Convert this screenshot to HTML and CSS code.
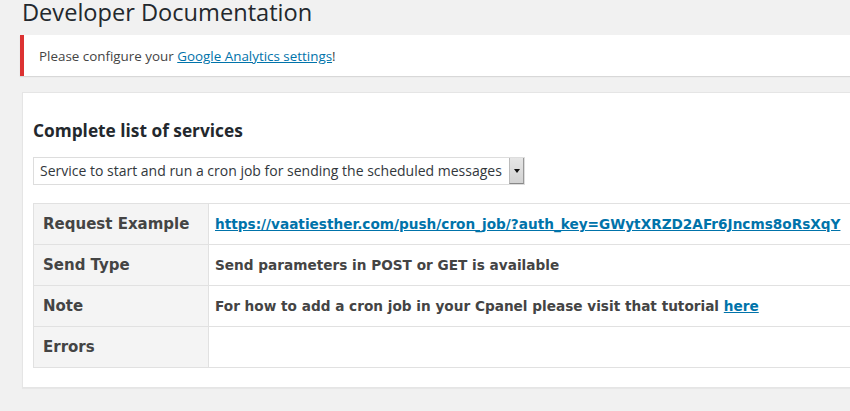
FILE: index.html
```html
<!DOCTYPE html>
<html>
<head>
<meta charset="utf-8">
<link rel="stylesheet" href="styles.css">
</head>
<body>
<div class="wrap">
  <h1 class="title">Developer Documentation</h1>
  <div class="notice">
    <p>Please configure your <a href="#">Google Analytics settings</a>!</p>
  </div>
  <div class="panel">
    <h2 class="panel-title">Complete list of services</h2>
    <div class="select">
      <span class="select-text">Service to start and run a cron job for sending the scheduled messages</span>
      <span class="select-btn"><span class="tri"></span></span>
    </div>
    <table class="doc">
      <tr><th>Request Example</th><td><a href="#">https://vaatiesther.com/push/cron_job/?auth_key=GWytXRZD2AFr6Jncms8oRsXqY</a></td></tr>
      <tr><th>Send Type</th><td>Send parameters in POST or GET is available</td></tr>
      <tr><th>Note</th><td>For how to add a cron job in your Cpanel please visit that tutorial <a href="#">here</a></td></tr>
      <tr><th>Errors</th><td></td></tr>
    </table>
  </div>
</div>
</body>
</html>
```
FILE: styles.css
```css
html, body {
  margin: 0;
  padding: 0;
  background: #f1f1f1;
  overflow: hidden;
}
body {
  font-family: "Open Sans", "Noto Sans", sans-serif;
  color: #444;
  width: 850px;
  height: 411px;
}
.wrap {
  padding-left: 20px;
  width: 900px;
}
.title {
  margin: 0;
  padding: 0 0 0 2px;
  width: max-content;
  font-size: 23.6px;
  font-weight: 400;
  line-height: 25px;
  color: #23282d;
  height: 35px;
}
.notice {
  background: #fff;
  border-left: 4px solid #dc3232;
  box-shadow: 0 1px 1px rgba(0,0,0,0.1);
  height: 41px;
  display: flex;
  align-items: center;
  padding-left: 15px;
}
.notice p {
  margin: 0;
  font-size: 13.4px;
  color: #444;
}
.notice a {
  color: #0073aa;
}
.panel {
  margin-top: 16px;
  margin-left: 2px;
  background: #fff;
  border: 1px solid #e5e5e5;
  box-shadow: 0 1px 1px rgba(0,0,0,0.04);
  padding: 24px 10px 19px 10px;
}
.panel-title {
  margin: 0 0 13px 0;
  font-size: 17.3px;
  font-weight: 700;
  line-height: 27px;
  color: #23282d;
}
.select {
  display: flex;
  width: 490px;
  height: 26px;
  border: 1px solid #ddd;
  align-items: stretch;
  background: #fff;
}
.select-text {
  flex: 1;
  font-size: 14px;
  line-height: 26px;
  padding-left: 6px;
  color: #32373c;
  white-space: nowrap;
}
.select-btn {
  width: 13px;
  background: linear-gradient(#e6e6e6, #d2d2d2);
  border-left: 1px solid #bbb;
  border-right: 1px solid #999;
  border-bottom: 1px solid #888;
  display: flex;
  align-items: center;
  justify-content: center;
}
.tri {
  width: 0;
  height: 0;
  border-left: 3px solid transparent;
  border-right: 3px solid transparent;
  border-top: 4px solid #111;
}
.doc {
  margin-top: 18px;
  border-collapse: collapse;
  width: 860px;
  font-family: "DejaVu Sans", sans-serif;
  font-weight: 700;
}
.doc th, .doc td {
  border: 1px solid #e1e1e1;
  height: 40px;
  padding: 0 8px;
  text-align: left;
  vertical-align: middle;
  color: #444;
}
.doc th {
  width: 157px;
  background: #f4f4f4;
  font-size: 15px;
  padding-left: 9px;
}
.doc td {
  font-size: 13.65px;
  padding-left: 6px;
  white-space: nowrap;
}
.doc a {
  color: #0073aa;
}
```
